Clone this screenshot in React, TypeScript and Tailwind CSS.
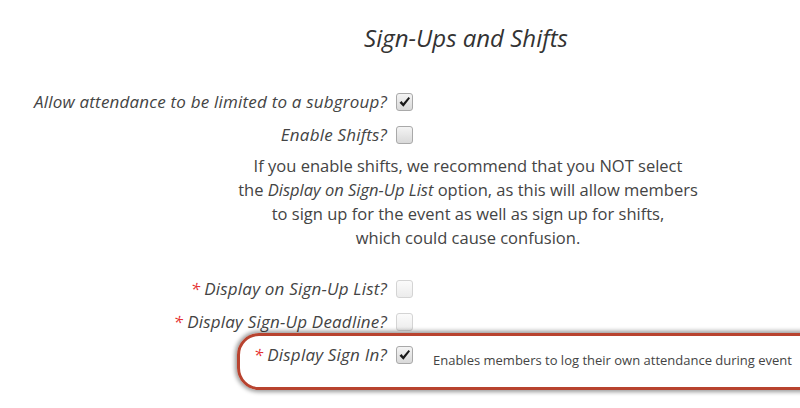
import React from "react";

function Box({ checked, disabled }: { checked?: boolean; disabled?: boolean }) {
  return (
    <div
      className={
        "w-[17px] h-[18px] rounded-[3px] border flex items-center justify-center " +
        (disabled
          ? "border-[#d4d4d4] bg-gradient-to-b from-[#fbfbfb] to-[#ececec]"
          : "border-[#a9a9a9] bg-gradient-to-b from-[#f4f4f4] to-[#d9d9d9]")
      }
    >
      {checked && (
        <svg width="13" height="12" viewBox="0 0 13 12">
          <path d="M1.5 6.8 L3.6 5 L5.2 7.2 L10.6 1 L12 2.2 L5.4 10.8 Z" fill="#1a1a1a" />
        </svg>
      )}
    </div>
  );
}

function Row({ label, req, checked, disabled }: { label: string; req?: boolean; checked?: boolean; disabled?: boolean }) {
  return (
    <div className="flex items-center h-[33px]">
      <div className="w-[396px] text-right italic text-[17px] tracking-[0.2px] text-[#444] pr-[9px]">
        {req && <span className="text-[#e53030] mr-[4px]">*</span>}
        {label}
      </div>
      <Box checked={checked} disabled={disabled} />
    </div>
  );
}

export default function App() {
  return (
    <div
      className="relative w-[800px] h-[408px] bg-white overflow-hidden text-[#444]"
      style={{ fontFamily: '"Open Sans", "DejaVu Sans", sans-serif' }}
    >
      <div className="pt-[23px] pl-[132px] text-center italic text-[24px] text-[#333] leading-[30px]">
        Sign-Ups and Shifts
      </div>
      <div className="mt-[32px]">
        <Row label="Allow attendance to be limited to a subgroup?" checked />
        <Row label="Enable Shifts?" />
      </div>
      <div className="pl-[136px] text-center text-[16.5px] leading-[24px] text-[#444] mt-[3px]">
        <div>If you enable shifts, we recommend that you NOT select</div>
        <div>
          the <span className="italic">Display on Sign-Up List</span> option, as this will allow members
        </div>
        <div>to sign up for the event as well as sign up for shifts,</div>
        <div>which could cause confusion.</div>
      </div>
      <div className="mt-[22px]">
        <Row label="Display on Sign-Up List?" req disabled />
        <Row label="Display Sign-Up Deadline?" req disabled />
        <div className="flex items-center h-[33px]">
          <div className="w-[396px] text-right italic text-[17px] tracking-[0.2px] text-[#444] pr-[9px]">
            <span className="text-[#e53030] mr-[4px]">*</span>
            Display Sign In?
          </div>
          <Box checked />
          <div className="ml-[20px] mt-[12px] text-[13px] text-[#444] whitespace-nowrap">
            Enables members to log their own attendance during event
          </div>
        </div>
      </div>
      <div className="absolute left-[237px] top-[333px] w-[600px] h-[57px] rounded-[22px] border-[3px] border-[#b8432f] shadow-[0_0_4px_2px_rgba(0,0,0,0.4)]" />
    </div>
  );
}
